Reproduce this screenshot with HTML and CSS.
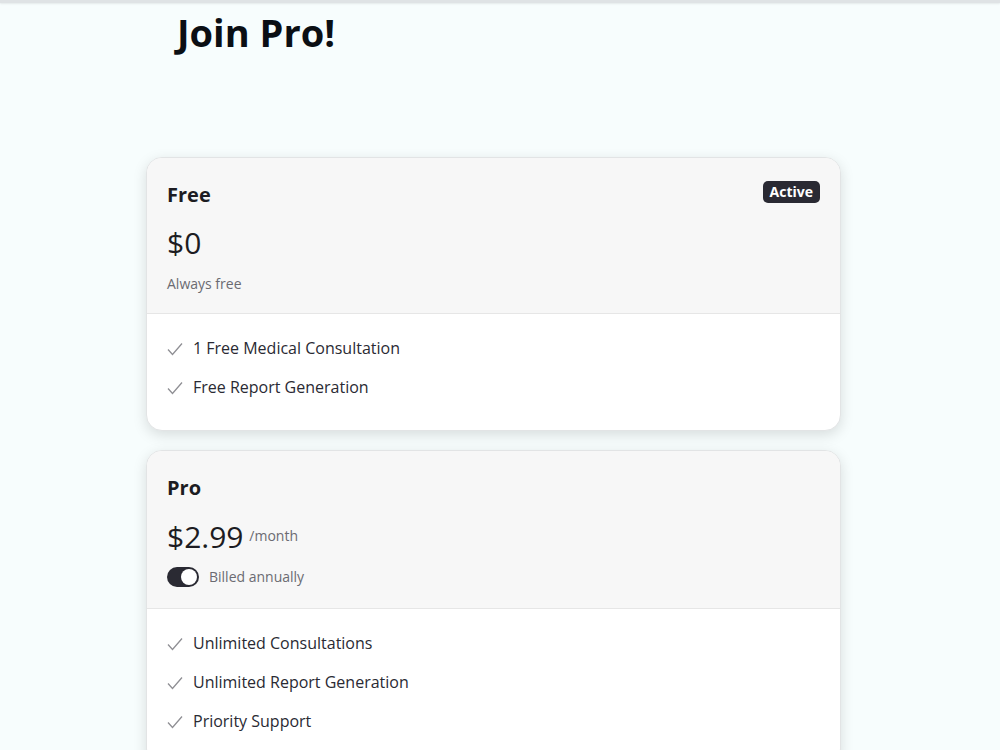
FILE: index.html
```html
<!DOCTYPE html>
<html lang="en">
<head>
    <meta charset="UTF-8">
    <meta name="viewport" content="width=device-width, initial-scale=1.0">
    <title>Join Pro</title>
    <link rel="stylesheet" href="styles.css">
</head>
<body>
  <div class="topbar"></div>
  <div class="page">
    <h1 class="title">Join Pro!</h1>

    <div class="plans">
      <div class="plan">
        <div class="planHead">
          <div class="planRow">
            <h2 class="planName">Free</h2>
            <span class="badge">Active</span>
          </div>
          <div class="price">$0</div>
          <p class="note">Always free</p>
        </div>
        <ul class="features">
          <li><svg class="check" viewBox="0 0 16 16"><polyline points="1,8.5 5.5,13.5 15,2.5"/></svg>1 Free Medical Consultation</li>
          <li><svg class="check" viewBox="0 0 16 16"><polyline points="1,8.5 5.5,13.5 15,2.5"/></svg>Free Report Generation</li>
        </ul>
      </div>

      <div class="plan">
        <div class="planHead">
          <div class="planRow">
            <h2 class="planName">Pro</h2>
          </div>
          <div class="price">$2.99 <span class="per">/month</span></div>
          <label class="billing">
            <span class="toggle"><span class="knob"></span></span>
            Billed annually
          </label>
        </div>
        <ul class="features">
          <li><svg class="check" viewBox="0 0 16 16"><polyline points="1,8.5 5.5,13.5 15,2.5"/></svg>Unlimited Consultations</li>
          <li><svg class="check" viewBox="0 0 16 16"><polyline points="1,8.5 5.5,13.5 15,2.5"/></svg>Unlimited Report Generation</li>
          <li><svg class="check" viewBox="0 0 16 16"><polyline points="1,8.5 5.5,13.5 15,2.5"/></svg>Priority Support</li>
        </ul>
      </div>
    </div>
  </div>
</body>
</html>
```

FILE: styles.css
```css
body {
  margin: 0;
  background: #f7fdfd;
  font-family: "Open Sans", "Noto Sans", sans-serif;
  color: #222;
}
.topbar {
  height: 3px;
  background: #dfe3e5;
  box-shadow: 0 1px 2px rgba(0, 0, 0, .08);
}
.page {
  padding-left: 146px;
  width: 695px;
}
.title {
  margin: 5px 0 0 31px;
  font-size: 38px;
  font-weight: 700;
  line-height: 48px;
  color: #0b0f14;
}
.plans {
  margin-top: 101px;
  display: flex;
  flex-direction: column;
  gap: 19px;
}
.plan {
  background: #fff;
  border: 1px solid #e2e4e5;
  border-radius: 16px;
  box-shadow: 0 4px 14px rgba(0, 0, 0, .13);
  overflow: hidden;
}
.planHead {
  background: #f7f7f7;
  border-bottom: 1px solid #e6e6e6;
  padding: 22px 20px 20px;
}
.planRow {
  display: flex;
  justify-content: space-between;
  align-items: center;
}
.planName {
  margin: 0;
  font-size: 20px;
  line-height: 30px;
  font-weight: 700;
  color: #1c1c22;
}
.badge {
  background: #2a2a33;
  color: #fff;
  font-size: 14px;
  font-weight: 700;
  padding: 1px 7px;
  border-radius: 5px;
  line-height: 20px;
  margin-top: -6px;
}
.price {
  margin-top: 14px;
  font-size: 30px;
  line-height: 38px;
  color: #1c1c22;
}
.per {
  font-size: 14px;
  color: #6b6b72;
  vertical-align: 7px;
  margin-left: -2px;
}
.note {
  margin: 12px 0 0;
  font-size: 14px;
  color: #6b6b72;
}
.billing {
  display: flex;
  align-items: center;
  gap: 10px;
  margin-top: 10px;
  font-size: 14px;
  line-height: 22px;
  color: #6b6b72;
}
.toggle {
  width: 32px;
  height: 20px;
  background: #2a2a33;
  border-radius: 10px;
  display: flex;
  justify-content: flex-end;
  align-items: center;
  padding: 0 2px;
  box-sizing: border-box;
}
.knob {
  width: 16px;
  height: 16px;
  border-radius: 50%;
  background: #fff;
}
.features {
  list-style: none;
  margin: 0;
  padding: 15px 20px 23px;
}
.features li {
  display: flex;
  align-items: center;
  gap: 10px;
  font-size: 16px;
  line-height: 39px;
  color: #2a2a33;
}
.check {
  width: 16px;
  height: 16px;
  fill: none;
  stroke: #8f8f94;
  stroke-width: 1.3;
}
```
